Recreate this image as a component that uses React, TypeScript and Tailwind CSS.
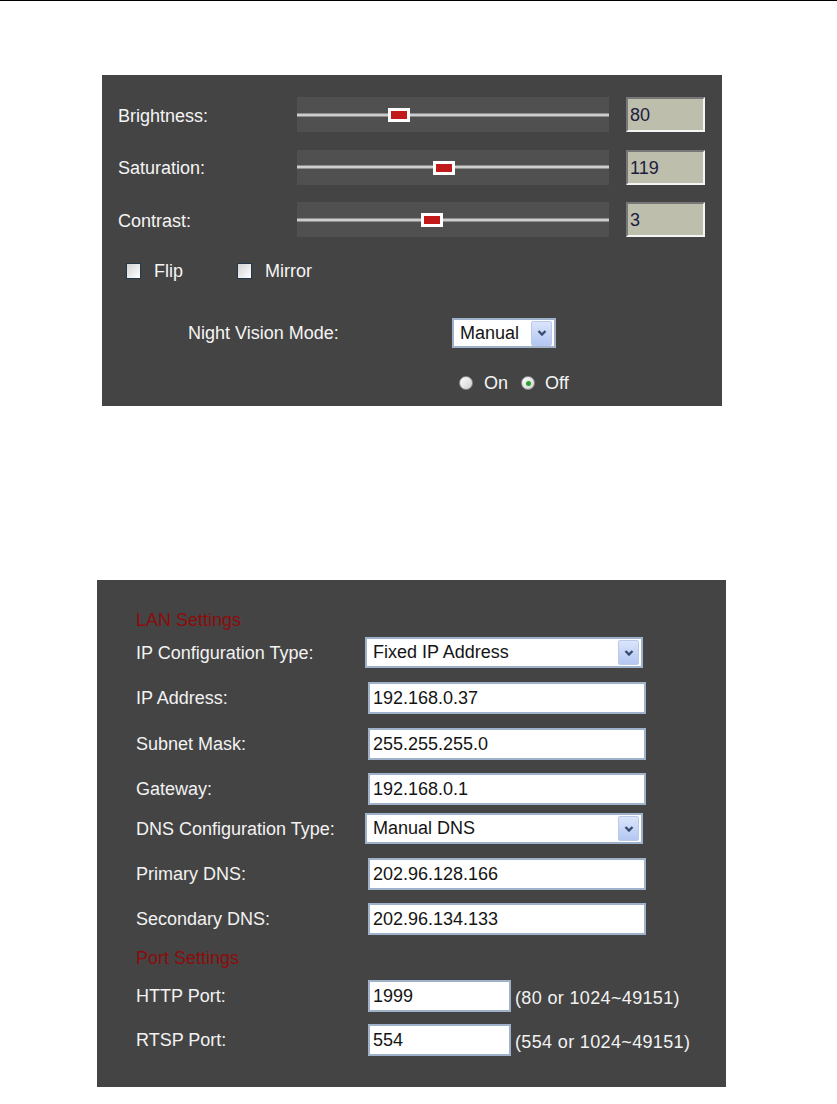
import React from "react";

const font = { fontFamily: '"Liberation Sans", Arial, sans-serif' };

function Chevron() {
  return (
    <svg width="12" height="10" viewBox="0 0 12 10">
      <path d="M2.5 3 L6 6.5 L9.5 3" fill="none" stroke="#3a4c70" strokeWidth="2.4" />
    </svg>
  );
}

function ArrowBtn() {
  return (
    <div className="w-[21px] h-[25px] rounded-[2px] border border-[#b8c9ea] bg-gradient-to-b from-[#dbe5fb] to-[#b3c7f2] flex items-center justify-center">
      <Chevron />
    </div>
  );
}

function Slider({ label, value, pos, first }: { label: string; value: string; pos: number; first?: boolean }) {
  return (
    <div className={first ? "flex items-center h-[35px]" : "flex items-center h-[35px] mt-[17.5px]"}>
      <div className="w-[179px] pt-[3px]">{label}</div>
      <div className="relative w-[312px] h-[35px] bg-[#505050] flex items-center">
        <div className="w-full h-[4px] bg-[#cdcdcd] border-y border-[#8e8e8e]" />
        <div className="absolute top-[11px] w-[22px] h-[14px] bg-white p-[3px]" style={{ left: pos }}>
          <div className="w-full h-full bg-[#c01a1a]" />
        </div>
      </div>
      <div className="ml-[17px] w-[79px] h-[35px] bg-[#bebead] border-2 border-t-[#777] border-l-[#777] border-b-[#f4f4f4] border-r-[#f4f4f4] pl-[2px] pt-[2px] flex items-center text-[#1c1c40]">
        {value}
      </div>
    </div>
  );
}

function Checkbox() {
  return <div className="w-[15px] h-[16px] border border-[#23384d] bg-gradient-to-br from-[#d4d4d4] to-[#ffffff]" />;
}

function Input({ value, w = "w-[278px]" }: { value: string; w?: string }) {
  return (
    <div className={`${w} h-[32px] bg-white border-2 border-[#9fb2c9] pl-[3px] flex items-center text-[#141414]`}>{value}</div>
  );
}

function Select({ value }: { value: string }) {
  return (
    <div className="w-[278px] h-[31px] bg-white border-2 border-[#9fb2c9] pl-[6px] pr-[2px] flex items-center justify-between text-[#141414]">
      <span>{value}</span>
      <ArrowBtn />
    </div>
  );
}

export default function App() {
  return (
    <div className="w-full min-h-[1104px] bg-white text-[18px]" style={font}>
      <div className="h-px w-full bg-black" />

      <div className="ml-[102px] mt-[74px] w-[620px] h-[331px] bg-[#444444] pt-[22px] pl-[16px] text-[#f4f4f4]">
        <Slider label="Brightness:" value="80" pos={91} first />
        <Slider label="Saturation:" value="119" pos={136} />
        <Slider label="Contrast:" value="3" pos={124} />

        <div className="flex items-center h-[20px] mt-[24px] ml-[8px]">
          <div className="w-[111px] flex items-center">
            <Checkbox />
            <span className="ml-[13px]">Flip</span>
          </div>
          <div className="flex items-center">
            <Checkbox />
            <span className="ml-[13px]">Mirror</span>
          </div>
        </div>

        <div className="flex items-center h-[30px] mt-[37px] ml-[70px]">
          <div className="w-[264px]">Night Vision Mode:</div>
          <div className="w-[104px] h-[30px] bg-white border-2 border-[#9fb2c9] pl-[6px] pr-[2px] flex items-center justify-between text-[#141414]">
            <span>Manual</span>
            <ArrowBtn />
          </div>
        </div>

        <div className="flex items-center h-[20px] mt-[25px] ml-[341px]">
          <div className="w-[14px] h-[14px] rounded-full border border-[#8a8a8a] bg-gradient-to-br from-[#ffffff] to-[#d0d0d0]" />
          <span className="ml-[11px]">On</span>
          <div className="ml-[13px] w-[14px] h-[14px] rounded-full border border-[#8a8a8a] bg-gradient-to-br from-[#ffffff] to-[#d0d0d0] flex items-center justify-center">
            <div className="w-[5px] h-[5px] rounded-full bg-[#2aa12a]" />
          </div>
          <span className="ml-[10px]">Off</span>
        </div>
      </div>

      <div className="ml-[97px] mt-[174px] w-[629px] h-[507px] bg-[#444444] pt-[29px] pl-[39px] text-[#f2f2f2]">
        <div className="h-[22px] leading-[22px] text-[#8c0c0c]">LAN Settings</div>

        <div className="flex items-center mt-[6px]">
          <div className="w-[229px] pt-[2px]">IP Configuration Type:</div>
          <Select value="Fixed IP Address" />
        </div>
        <div className="flex items-center mt-[14px]">
          <div className="w-[232px]">IP Address:</div>
          <Input value="192.168.0.37" />
        </div>
        <div className="flex items-center mt-[14px]">
          <div className="w-[232px]">Subnet Mask:</div>
          <Input value="255.255.255.0" />
        </div>
        <div className="flex items-center mt-[13px]">
          <div className="w-[232px]">Gateway:</div>
          <Input value="192.168.0.1" />
        </div>
        <div className="flex items-center mt-[8px]">
          <div className="w-[229px] pt-[2px]">DNS Configuration Type:</div>
          <Select value="Manual DNS" />
        </div>
        <div className="flex items-center mt-[14px]">
          <div className="w-[232px]">Primary DNS:</div>
          <Input value="202.96.128.166" />
        </div>
        <div className="flex items-center mt-[13px]">
          <div className="w-[232px]">Secondary DNS:</div>
          <Input value="202.96.134.133" />
        </div>

        <div className="h-[22px] leading-[22px] mt-[12px] text-[#8c0c0c]">Port Settings</div>

        <div className="flex items-center mt-[11px]">
          <div className="w-[232px]">HTTP Port:</div>
          <Input value="1999" w="w-[143px]" />
          <span className="ml-[4px] mt-[5px] tracking-[0.35px]">(80 or 1024~49151)</span>
        </div>
        <div className="flex items-center mt-[12px]">
          <div className="w-[232px]">RTSP Port:</div>
          <Input value="554" w="w-[143px]" />
          <span className="ml-[4px] mt-[5px] tracking-[0.35px]">(554 or 1024~49151)</span>
        </div>
      </div>
    </div>
  );
}
